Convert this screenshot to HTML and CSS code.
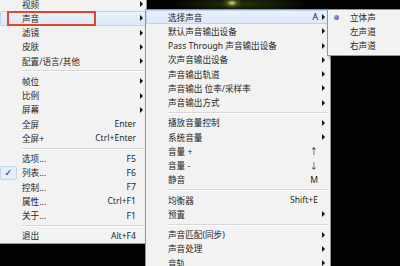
FILE: index.html
```html
<!DOCTYPE html>
<html lang="zh-CN">
<head>
  <meta charset="UTF-8">
  <title>播放器菜单</title>
  <link rel="stylesheet" href="styles.css">
</head>
<body>
  <div class="screen">

    <!-- Main context menu -->
    <div class="menu menu-main">
      <div class="item"><span class="gutter"></span><span class="label">视频</span><span class="key"></span><span class="sub"><i class="arrow"></i></span></div>
      <div class="item hot">
        <span class="gutter"></span><span class="label">声音</span><span class="key"></span><span class="sub"><i class="arrow"></i></span>
        <span class="callout"></span>
      </div>
      <div class="item"><span class="gutter"></span><span class="label">滤镜</span><span class="key"></span><span class="sub"><i class="arrow"></i></span></div>
      <div class="item"><span class="gutter"></span><span class="label">皮肤</span><span class="key"></span><span class="sub"><i class="arrow"></i></span></div>
      <div class="item"><span class="gutter"></span><span class="label">配置/语言/其他</span><span class="key"></span><span class="sub"><i class="arrow"></i></span></div>
      <div class="sep"></div>
      <div class="item"><span class="gutter"></span><span class="label">帧位</span><span class="key"></span><span class="sub"><i class="arrow"></i></span></div>
      <div class="item"><span class="gutter"></span><span class="label">比例</span><span class="key"></span><span class="sub"><i class="arrow"></i></span></div>
      <div class="item"><span class="gutter"></span><span class="label">屏幕</span><span class="key"></span><span class="sub"><i class="arrow"></i></span></div>
      <div class="item"><span class="gutter"></span><span class="label">全屏</span><span class="key">Enter</span><span class="sub"></span></div>
      <div class="item"><span class="gutter"></span><span class="label">全屏+</span><span class="key">Ctrl+Enter</span><span class="sub"></span></div>
      <div class="sep"></div>
      <div class="item"><span class="gutter"></span><span class="label">选项...</span><span class="key">F5</span><span class="sub"></span></div>
      <div class="item"><span class="gutter"><span class="check">✓</span></span><span class="label">列表...</span><span class="key">F6</span><span class="sub"></span></div>
      <div class="item"><span class="gutter"></span><span class="label">控制...</span><span class="key">F7</span><span class="sub"></span></div>
      <div class="item"><span class="gutter"></span><span class="label">属性...</span><span class="key">Ctrl+F1</span><span class="sub"></span></div>
      <div class="item"><span class="gutter"></span><span class="label">关于...</span><span class="key">F1</span><span class="sub"></span></div>
      <div class="sep"></div>
      <div class="item"><span class="gutter"></span><span class="label">退出</span><span class="key">Alt+F4</span><span class="sub"></span></div>
    </div>

    <!-- Audio submenu -->
    <div class="menu menu-audio">
      <div class="item hot"><span class="gutter"></span><span class="label">选择声音</span><span class="key">A</span><span class="sub"><i class="arrow"></i></span></div>
      <div class="item"><span class="gutter"></span><span class="label">默认声音输出设备</span><span class="key"></span><span class="sub"><i class="arrow"></i></span></div>
      <div class="item"><span class="gutter"></span><span class="label">Pass Through 声音输出设备</span><span class="key"></span><span class="sub"><i class="arrow"></i></span></div>
      <div class="item"><span class="gutter"></span><span class="label">次声音输出设备</span><span class="key"></span><span class="sub"><i class="arrow"></i></span></div>
      <div class="item"><span class="gutter"></span><span class="label">声音输出轨道</span><span class="key"></span><span class="sub"><i class="arrow"></i></span></div>
      <div class="item"><span class="gutter"></span><span class="label">声音输出 位率/采样率</span><span class="key"></span><span class="sub"><i class="arrow"></i></span></div>
      <div class="item"><span class="gutter"></span><span class="label">声音输出方式</span><span class="key"></span><span class="sub"><i class="arrow"></i></span></div>
      <div class="sep"></div>
      <div class="item"><span class="gutter"></span><span class="label">播放音量控制</span><span class="key"></span><span class="sub"><i class="arrow"></i></span></div>
      <div class="item"><span class="gutter"></span><span class="label">系统音量</span><span class="key"></span><span class="sub"><i class="arrow"></i></span></div>
      <div class="item"><span class="gutter"></span><span class="label">音量 +</span><span class="key">↑</span><span class="sub"></span></div>
      <div class="item"><span class="gutter"></span><span class="label">音量 -</span><span class="key">↓</span><span class="sub"></span></div>
      <div class="item"><span class="gutter"></span><span class="label">静音</span><span class="key">M</span><span class="sub"></span></div>
      <div class="sep"></div>
      <div class="item"><span class="gutter"></span><span class="label">均衡器</span><span class="key">Shift+E</span><span class="sub"></span></div>
      <div class="item"><span class="gutter"></span><span class="label">预置</span><span class="key"></span><span class="sub"><i class="arrow"></i></span></div>
      <div class="sep"></div>
      <div class="item"><span class="gutter"></span><span class="label">声音匹配(同步)</span><span class="key"></span><span class="sub"><i class="arrow"></i></span></div>
      <div class="item"><span class="gutter"></span><span class="label">声音处理</span><span class="key"></span><span class="sub"><i class="arrow"></i></span></div>
      <div class="item"><span class="gutter"></span><span class="label">音轨</span><span class="key"></span><span class="sub"><i class="arrow"></i></span></div>
    </div>

    <!-- Channel submenu -->
    <div class="menu menu-channel">
      <div class="item"><span class="gutter"><span class="radio"></span></span><span class="label">立体声</span></div>
      <div class="item"><span class="gutter"></span><span class="label">左声道</span></div>
      <div class="item"><span class="gutter"></span><span class="label">右声道</span></div>
    </div>

  </div>
</body>
</html>
```

FILE: styles.css
```css
/* Video area behind the menus */
body {
  margin: 0;
  background: #000;
  font-family: "Noto Sans", "Noto Sans CJK SC", sans-serif;
}
.screen {
  position: relative;
  width: 400px;
  height: 266px;
  overflow: hidden;
  background:
    radial-gradient(ellipse 10px 6px at 232px 3px, rgba(230, 240, 170, 0.9), rgba(120, 140, 40, 0.4) 50%, transparent 100%),
    radial-gradient(ellipse 70px 10px at 240px 4px, rgba(50, 60, 15, 0.8), transparent 100%),
    #020302;
}

/* Menus (popups) */
.menu {
  position: absolute;
  background: #f2f2f2;
  border: 1px solid #979797;
  box-shadow: 2px 2px 3px rgba(0, 0, 0, 0.35);
  color: #262626;
  font-size: 8.6px;
}
.menu-main {
  left: -1px;
  top: -4px;
  width: 146px;
}
.menu-audio {
  left: 145px;
  top: 9px;
  width: 184px;
}
.menu-channel {
  left: 327px;
  top: 9px;
  width: 90px;
  padding-bottom: 2px;
}

.item {
  position: relative;
  display: flex;
  align-items: center;
  height: 14.25px;
  white-space: nowrap;
}
.item.hot {
  background: linear-gradient(#eaf1fb, #dce8f7);
  box-shadow: inset 0 0 0 1px #bcd4f0;
  border-radius: 2px;
}
.gutter {
  width: 17px;
  margin-right: 5px;
  display: flex;
  justify-content: center;
  align-items: center;
  align-self: stretch;
}
.label {
  flex: 1;
}
.key {
  text-align: right;
}
.sub {
  width: 10px;
  display: flex;
  align-items: center;
}
.menu-audio .sub {
  width: 12px;
}
.arrow {
  margin-left: 4px;
  width: 0;
  height: 0;
  border-left: 3px solid #111;
  border-top: 3px solid transparent;
  border-bottom: 3px solid transparent;
}

.sep {
  height: 1px;
  margin: 2px 2px 2px 22px;
  background: #d7d7d7;
  border-bottom: 1px solid #fff;
}

/* Check and radio marks */
.check {
  color: #20407a;
  font-size: 10px;
  font-family: "DejaVu Sans", sans-serif;
  line-height: 1;
}
.item .gutter .check {
  padding: 1px 3px;
  background: #e6eef8;
  border: 1px solid #c6d6ea;
  border-radius: 2px;
}
.radio {
  width: 5px;
  height: 5px;
  border-radius: 50%;
  background: radial-gradient(circle at 35% 35%, #9aa6e0, #3a4aa8);
}

/* Red annotation box */
.callout {
  position: absolute;
  left: 7px;
  top: 0;
  width: 85px;
  height: 11px;
  border: 2px solid #e4432c;
}
```
